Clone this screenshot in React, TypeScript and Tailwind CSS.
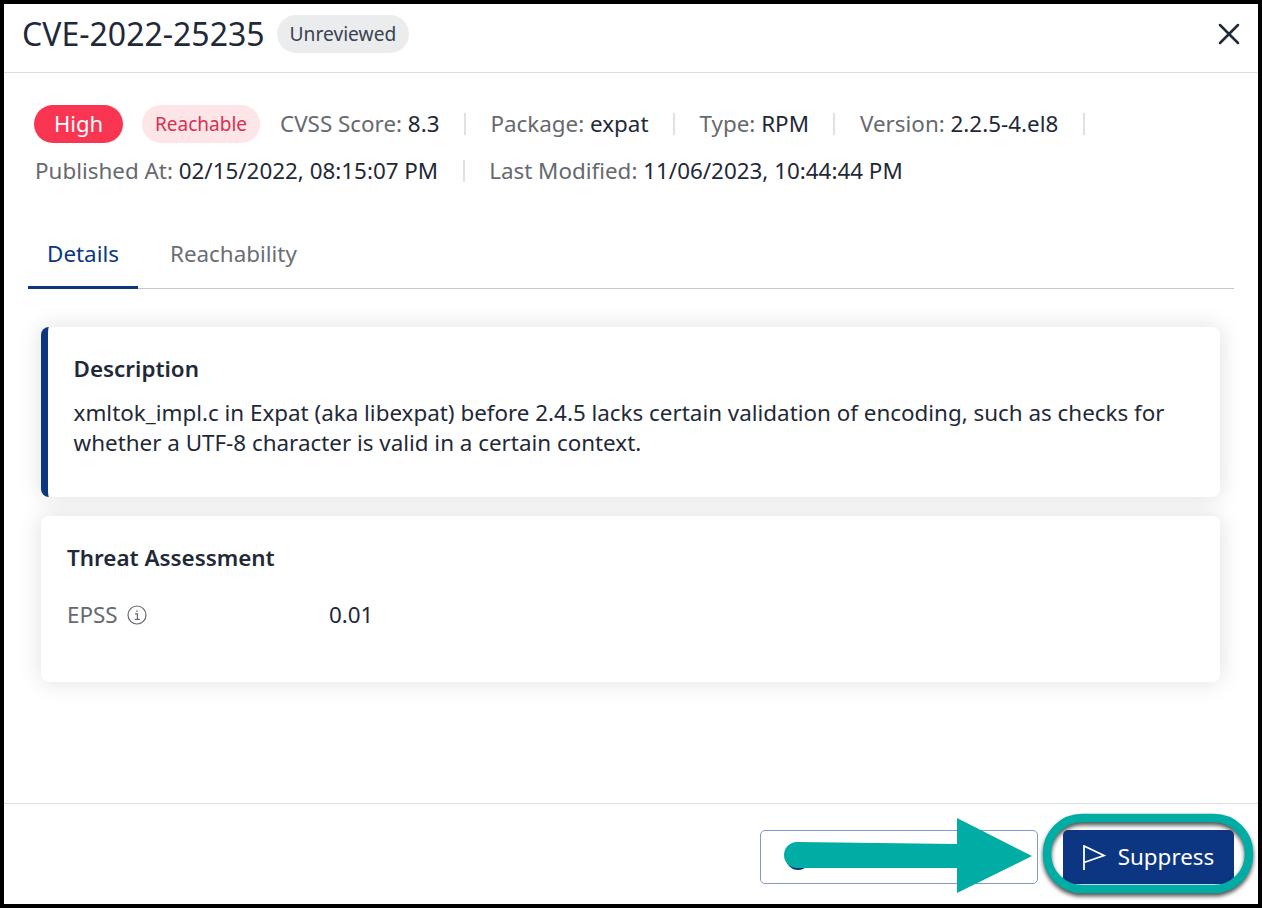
import React from "react";
import { X } from "lucide-react";

const Sep = () => <span className="mx-[24.5px] inline-block h-[22px] w-[2px] bg-[#dfe1e4]" />;

function Meta({ label, value }: { label: string; value: string }) {
  return (
    <span className="whitespace-nowrap text-[#66696e]">
      {label} <span className="text-[#1f2937]">{value}</span>
    </span>
  );
}

export default function App() {
  return (
    <div className="relative flex h-[908px] w-[1262px] flex-col overflow-hidden border-4 border-black bg-white font-['Noto_Sans',sans-serif] text-[#1f2937]">
      <header className="flex h-[69px] shrink-0 items-center justify-between border-b border-[#dcdfe2] pb-[8px] pl-[18px] pr-[11px]">
        <div className="flex items-center gap-[12px]">
          <h1 className="text-[32px] leading-10 text-[#1f2937]">CVE-2022-25235</h1>
          <span className="flex h-[38px] items-center rounded-full bg-[#eaecee] px-[13px] text-[19.2px] text-[#3a4350]">Unreviewed</span>
        </div>
        <X size={36} strokeWidth={1.7} className="text-[#1f2937]" />
      </header>

      <main className="flex-1 px-[24px]">
        <div className="pl-[6px] pt-[32px] text-[22.4px]">
          <div className="flex h-[38px] items-center">
            <span className="mr-[19px] flex h-[38px] w-[89px] items-center justify-center rounded-full bg-[#f93551] pb-[2px] text-[22px] text-white">High</span>
            <span className="mr-[20px] flex h-[38px] w-[118px] items-center justify-center rounded-full bg-[#fde5e8] text-[19px] text-[#d9304f]">Reachable</span>
            <Meta label="CVSS Score:" value="8.3" />
            <Sep />
            <Meta label="Package:" value="expat" />
            <Sep />
            <Meta label="Type:" value="RPM" />
            <Sep />
            <Meta label="Version:" value="2.2.5-4.el8" />
            <Sep />
          </div>
          <div className="mt-[9px] flex h-[38px] items-center pl-[1px]">
            <Meta label="Published At:" value="02/15/2022, 08:15:07 PM" />
            <Sep />
            <Meta label="Last Modified:" value="11/06/2023, 10:44:44 PM" />
          </div>
        </div>

        <nav className="mt-[27px] flex h-[72px] border-b border-[#c5c9ce] text-[22.4px]">
          <div className="flex h-[72px] w-[110px] items-center justify-center border-b-[3px] border-[#0c3582] pt-[5px] text-[#0c3582]">Details</div>
          <div className="ml-[32px] flex h-[71px] items-center pt-[2px] text-[#6b6e73]">Reachability</div>
        </nav>

        <section className="mt-[38px] flex flex-col gap-[19px] pl-[13px] pr-[14px]">
          <article className="h-[170px] rounded-lg border-l-[7px] border-[#0c3582] bg-white pl-[25.6px] pr-[40px] pt-[26px] text-[22.4px] leading-[30px] shadow-[0_0_24px_rgba(0,0,0,0.13)]">
            <h2 className="font-semibold leading-[32px]">Description</h2>
            <p className="mt-[13px]">xmltok_impl.c in Expat (aka libexpat) before 2.4.5 lacks certain validation of encoding, such as checks for whether a UTF-8 character is valid in a certain context.</p>
          </article>
          <article className="h-[166px] rounded-lg bg-white pl-[26px] pt-[26px] text-[22.4px] shadow-[0_0_24px_rgba(0,0,0,0.13)]">
            <h2 className="font-semibold leading-[32px]">Threat Assessment</h2>
            <div className="mt-[25px] flex items-center leading-[32px]">
              <span className="flex w-[262px] items-center gap-[9px] text-[#66696e]">
                EPSS
                <svg width="20" height="20" viewBox="0 0 20 20" fill="none" stroke="currentColor" strokeWidth="1.2">
                  <circle cx="10" cy="10" r="9" />
                  <path d="M8 8.8h2.4v5.4M7.8 14.4h5" />
                  <path d="M10 5.4v1.4" strokeWidth="1.6" />
                </svg>
              </span>
              <span>0.01</span>
            </div>
          </article>
        </section>
      </main>

      <footer className="flex h-[101px] shrink-0 items-start justify-end gap-[25px] border-t border-[#dcdfe2] pr-[24px] pt-[26px]">
        <div className="relative h-[54px] w-[278px] rounded-[5px] border border-[#8797c9]">
          <span className="absolute left-[25px] top-[15px] h-[24px] w-[24px] rounded-full bg-[#0c3582]" />
        </div>
        <button className="flex h-[54px] w-[171px] items-center justify-center gap-[12px] rounded-[5px] bg-[#0c3582] text-[22.4px] text-white">
          <svg width="23" height="25" viewBox="0 0 23 25" fill="none" stroke="currentColor" strokeWidth="1.8">
            <path d="M1 25V1l20 9.5L1 17.5" />
          </svg>
          Suppress
        </button>
      </footer>

      <svg className="pointer-events-none absolute left-[-4px] top-[-4px]" width="1262" height="908" viewBox="0 0 1262 908" fill="none">
        <rect x="1047" y="818" width="202" height="71" rx="35" stroke="#00ada5" strokeWidth="8.5" className="drop-shadow-[0_3px_2px_rgba(50,50,50,0.85)]" />
        <path d="M797 842 L957 844 V818 L1032 856 L957 893 V868 L797 868 A13 13 0 0 1 797 842 Z" fill="#00ada5" />
      </svg>
    </div>
  );
}
